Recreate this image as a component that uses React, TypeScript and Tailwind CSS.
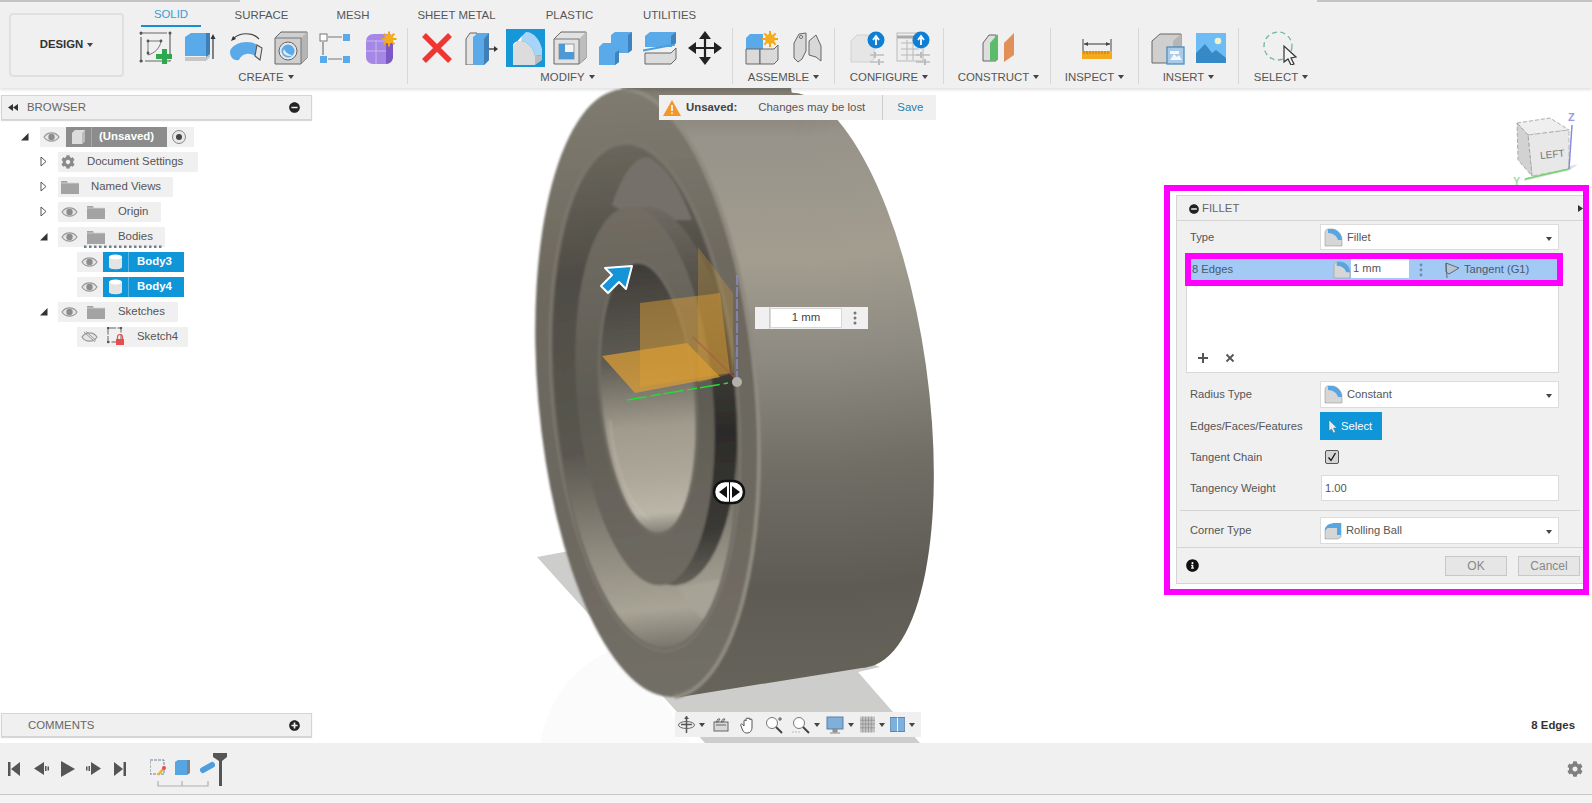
import React from 'react';
import { FaCog, FaInfoCircle, FaMinusCircle, FaPlusCircle } from 'react-icons/fa';

const Caret = () => (
  <span className="ml-[4px] inline-block border-x-[3px] border-t-[4px] border-x-transparent border-t-[#444]" />
);

const Sk = ({ children, w = 34, h = 34, className = '' }: { children: React.ReactNode; w?: number; h?: number; className?: string }) => (
  <svg width={w} height={h} viewBox={`0 0 ${w} ${h}`} className={`shrink-0 ${className}`}>
    {children}
  </svg>
);

// ribbon icons
const SketchIco = () => (
  <Sk>
    <rect x="2" y="2" width="29" height="28" fill="none" stroke="#666" strokeWidth="1.2" strokeDasharray="26 2" />
    <path d="M9 24V10h13M9 24C16 22 21 17 22 10" fill="none" stroke="#777" strokeWidth="1" />
    <circle cx="9" cy="10" r="1.4" fill="#555" /><circle cx="22" cy="10" r="1.4" fill="#555" /><circle cx="9" cy="22" r="1.4" fill="#555" />
    <circle cx="2" cy="2" r="1.5" fill="#555" /><circle cx="31" cy="2" r="1.5" fill="#555" /><circle cx="2" cy="30" r="1.5" fill="#555" />
    <path d="M23 18h5v5h5v5h-5v5h-5v-5h-6v-5h6z" fill="#2ea84d" />
  </Sk>
);
const ExtrudeIco = () => (
  <Sk>
    <path d="M1 6l6-4h19v23H1z" fill="#5aa9e8" /><path d="M22 2h4v23l-4 3z" fill="#3f7fb6" />
    <path d="M1 26h21l4-3v3l-4 4H1z" fill="#c6c6c6" />
    <path d="M29 28V5" stroke="#444" strokeWidth="1.3" /><path d="M26.5 8l2.5-5 2.5 5z" fill="#333" />
  </Sk>
);
const RevolveIco = () => (
  <Sk>
    <path d="M4 8C11 1 24 1 30 8" fill="none" stroke="#444" strokeWidth="1.2" /><path d="M2 10l2-5 3 3z" fill="#333" />
    <path d="M1 20C5 10 22 9 28 14l-2 11c-5-4-13-3-16 4-6 1-9-3-9-9z" fill="#5aa9e8" />
    <path d="M28 14l5 3-2 12-5-4z" fill="#e8e8e8" stroke="#555" strokeWidth="1.1" />
  </Sk>
);
const HoleIco = () => (
  <Sk>
    <path d="M1 7l6-6h26v26l-6 6H1z" fill="#cfcfcf" stroke="#666" strokeWidth="1" /><path d="M27 7l6-6v26l-6 6z" fill="#b5b5b5" /><path d="M1 7h26v26" fill="none" stroke="#777" />
    <circle cx="14" cy="20" r="9" fill="#e8e8e8" stroke="#666" /><circle cx="14" cy="20" r="6.5" fill="#5aa9e8" /><path d="M10 18c2 4 5 6 9 6-3 2-9 1-10-3z" fill="#e8e8e8" />
  </Sk>
);
const PatternIco = () => (
  <Sk>
    <rect x="1" y="3" width="7" height="7" fill="#fff" stroke="#777" /><rect x="24" y="3" width="7" height="7" fill="#5aa9e8" />
    <rect x="1" y="25" width="7" height="7" fill="#5aa9e8" /><rect x="24" y="25" width="7" height="7" fill="#5aa9e8" />
    <path d="M9 6h14M4 11v13M9 28h14" stroke="#777" strokeWidth="1.2" />
  </Sk>
);
const Star = ({ x, y, r = 7 }: { x: number; y: number; r?: number }) => (
  <g transform={`translate(${x} ${y})`}>
    {[0, 45, 90, 135].map((a) => (
      <rect key={a} x={-r} y={-1} width={r * 2} height={2} fill="#f4a312" transform={`rotate(${a})`} />
    ))}
    <circle r={r * 0.62} fill="#f6ad1c" />
  </g>
);
const FormIco = () => (
  <Sk>
    <path d="M2 11c0-5 3-8 8-8h17v24c0 4-3 6-7 6H9c-4 0-7-3-7-7z" fill="#a588e6" /><path d="M22 33V10l7-6v22c0 4-3 7-7 7z" fill="#7c58c4" />
    <path d="M2 20h20M12 9v24M2 10h20" stroke="#c9b5ef" strokeWidth="1" />
    <Star x={25} y={8} r={7.5} />
  </Sk>
);
const RedX = () => (
  <Sk><path d="M4 4l26 26M30 4L4 30" stroke="#ee3633" strokeWidth="5.5" /></Sk>
);
const PressPull = () => (
  <Sk>
    <path d="M1 8l4-6h7v32H1z" fill="#e4e4e4" stroke="#666" /><path d="M8 6l5-4h11v27l-5 5H8z" fill="#5aa9e8" /><path d="M19 8l5-6v27l-5 5z" fill="#3f7fb6" />
    <path d="M24 18h6" stroke="#333" strokeWidth="1.3" /><path d="M29 15l4 3-4 3z" fill="#333" />
  </Sk>
);
const FilletBig = () => (
  <div className="-ml-[4px] -mr-[3px] h-[38px] w-[39px] shrink-0 bg-[#1597d8]">
    <Sk w={39} h={38}>
      <path d="M7 36V17c0-3 3-5 8-5 7 0 13 8 14 15v9z" fill="#dcdcdc" />
      <path d="M7 17l9-10h5l-6 5c-5 0-8 2-8 5z" fill="#fff" />
      <path d="M16 7l4-4c8 0 14 8 16 17v6l-7 1c-1-7-7-15-14-15z" fill="#a8d4f7" />
      <path d="M29 27l7-1v5l-7 5z" fill="#bdbdbd" />
    </Sk>
  </div>
);
const ShellIco = () => (
  <Sk>
    <path d="M1 8l7-7h25v26l-7 6H1z" fill="#e2e2e2" stroke="#666" /><path d="M26 8l7-7v26l-7 6z" fill="#bdbdbd" /><path d="M1 8h25v25" fill="none" stroke="#777" />
    <rect x="6" y="13" width="15" height="15" fill="#f4f4f4" stroke="#999" /><path d="M6 13h6v8h9v7H6z" fill="#4f98d6" />
  </Sk>
);
const CombineIco = () => (
  <Sk>
    <path d="M1 16l4-4h8V4l4-3h17v18l-4 3h-9v9l-4 3H1z" fill="#5aa9e8" /><path d="M30 4l4-3v18l-4 3zM17 22l4-3v12l-4 3z" fill="#3f82bc" />
  </Sk>
);
const SplitIco = () => (
  <Sk>
    <path d="M2 5l5-4h26v11l-5 4H2z" fill="#5aa9e8" /><path d="M28 5l5-4v11l-5 4z" fill="#3f82bc" />
    <path d="M0 19l32-6M0 20l32-6" stroke="#4a9edc" strokeWidth="1.2" />
    <path d="M2 22h26l5-5v11l-5 5H2z" fill="#dcdcdc" stroke="#666" />
  </Sk>
);
const MoveIco = () => (
  <Sk>
    <path d="M17 3v28M3 17h28" stroke="#222" strokeWidth="2.2" />
    <path d="M17 0l6 8H11zM17 34l6-8H11zM0 17l8-6v12zM34 17l-8-6v12z" fill="#222" />
  </Sk>
);
const AssembleIco = () => (
  <Sk>
    <path d="M1 7l4-4h13v15H1z" fill="#5aa9e8" /><path d="M1 18h14v15H1z" fill="#dadada" stroke="#666" /><path d="M15 18h14l4-4v15l-4 4H15z" fill="#dadada" stroke="#666" />
    <Star x={25} y={8} r={8} />
  </Sk>
);
const JointIco = () => (
  <Sk w={30}>
    <path d="M2 12l5-9 7-1v18l-4 8-4 3-4-4z" fill="#d8d8d8" stroke="#666" /><path d="M17 10l7-6 5 11v15l-5-4-7-2z" fill="#d8d8d8" stroke="#666" />
    <circle cx="9" cy="6" r="1.5" fill="#fff" stroke="#666" />
  </Sk>
);
const ConfigBadge = ({ x }: { x: number }) => (
  <g>
    <circle cx={x} cy="9" r="8.5" fill="#0f7fd6" />
    <path d={`M${x} 14V7M${x - 3} 9l3-4 3 4`} stroke="#fff" strokeWidth="1.8" fill="none" />
    <path d="M20 24h14M20 31h14" stroke="#bcbcbc" strokeWidth="1.3" /><path d="M25 21v6M29 28v6" stroke="#bcbcbc" strokeWidth="2" />
  </g>
);
const ConfigA = () => (
  <Sk w={36}>
    <path d="M1 10l6-6h17v24l-4 3H1z" fill="#e6e6e6" stroke="#d0d0d0" />
    <ConfigBadge x={26} />
  </Sk>
);
const ConfigB = () => (
  <Sk>
    <rect x="1" y="2" width="26" height="28" fill="#eee" stroke="#b9b9b9" /><path d="M1 6h26" stroke="#aaa" strokeWidth="3" />
    <path d="M5 12h18M5 18h18M5 24h18M11 9v20M17 9v20" stroke="#b8b8b8" />
    <ConfigBadge x={25} />
  </Sk>
);
const ConstructIco = () => (
  <Sk>
    <path d="M1 12l6-8h7v26H1z" fill="#dedede" stroke="#666" /><path d="M8 30V12l8-9v26z" fill="#5dbb6c" />
    <path d="M22 31V12l10-10v22z" fill="#e2905a" />
  </Sk>
);
const InspectIco = () => (
  <Sk w={32}>
    <path d="M2 8v13M30 8v13" stroke="#555" strokeWidth="1.1" /><path d="M3 13h26" stroke="#444" strokeWidth="1.1" /><path d="M3 13l4-2v4zM29 13l-4-2v4z" fill="#444" />
    <rect x="1" y="20" width="30" height="8" fill="#f5a91c" /><path d="M3 20v3M6 20v3M9 20v3M12 20v3M15 20v3M18 20v3M21 20v3M24 20v3M27 20v3" stroke="#a26a10" strokeWidth="0.8" />
  </Sk>
);
const InsertA = () => (
  <Sk>
    <path d="M1 10l8-7h21v25l-8 4H1z" fill="#cfcfcf" stroke="#666" /><path d="M22 10l8-7v25l-8 4z" fill="#b5b5b5" />
    <rect x="16" y="16" width="17" height="17" fill="#a9cbe8" stroke="#4d8fc2" strokeWidth="1.3" /><path d="M19 29l4-6 3 3 2-2 3 5zM19 20h9v3h-9z" fill="#f3f8fc" />
  </Sk>
);
const InsertB = () => (
  <Sk w={30}>
    <rect y="2" width="30" height="30" fill="#6dbcf5" /><path d="M0 32V22l9-9 7 9 4-3 10 8v5z" fill="#3589c6" /><circle cx="22" cy="10" r="3.3" fill="#f0f2c8" />
  </Sk>
);
const SelectIco = () => (
  <Sk w={36}>
    <circle cx="16" cy="15" r="14" fill="none" stroke="#74b69a" strokeWidth="1.3" strokeDasharray="5 3.5" />
    <path d="M22 15v16l4-3 3 6 3-1-3-6 5-1z" fill="#f4f4f4" stroke="#333" strokeWidth="1.2" />
  </Sk>
);

const TABS = [
  { t: 'SOLID', c: 'w-[60px] border-b-[2px] border-[#1590d0] text-[#3c9ad0]' },
  { t: 'SURFACE', c: 'w-[121px]' },
  { t: 'MESH', c: 'w-[62px]' },
  { t: 'SHEET METAL', c: 'w-[145px]' },
  { t: 'PLASTIC', c: 'w-[81px]' },
  { t: 'UTILITIES', c: 'w-[119px]' },
];

const Group = ({ w, label, labelPad = '', pad = '', children }: { w: string; label: string; labelPad?: string; pad?: string; children: React.ReactNode }) => (
  <div className={`flex h-[56px] flex-col border-r border-[#d8d8d8] ${w}`}>
    <div className={`flex h-[40px] items-center ${pad}`}>{children}</div>
    <div className={`mt-[2px] flex items-center justify-center text-[11.4px] leading-[14px] text-[#555] ${labelPad}`}>
      {label}
      <Caret />
    </div>
  </div>
);

const Ribbon = () => (
  <header className="relative z-20 flex h-[88px] shrink-0 flex-col bg-[#f0f0f0] shadow-[0_2px_3px_rgba(0,0,0,0.12)]">
    <div className="flex h-[2px] shrink-0 justify-between">
      <div className="w-[240px] bg-[#c4c4c4]" />
      <div className="w-[275px] bg-[#c4c4c4]" />
    </div>
    <div className="flex">
      <button className="ml-[9px] mt-[11px] flex h-[64px] w-[115px] items-center justify-center rounded-[4px] border-2 border-[#e0e0e0] text-[11.4px] font-bold text-[#333]">
        DESIGN
        <Caret />
      </button>
      <div className="ml-[14px] flex flex-col">
        <div className="ml-[3px] flex h-[25px] text-[11.4px] text-[#555]">
          {TABS.map((tab) => (
            <div key={tab.t} className={`flex items-center justify-center pt-[2px] ${tab.c}`}>
              {tab.t}
            </div>
          ))}
        </div>
        <div className="mt-[1px] flex">
          <Group w="w-[270px]" label="CREATE" labelPad="pr-[13px]" pad="pl-[1px] gap-[11px]">
            <SketchIco /><ExtrudeIco /><RevolveIco /><HoleIco /><PatternIco /><FormIco />
          </Group>
          <Group w="w-[325px]" label="MODIFY" labelPad="pr-[5px]" pad="pl-[12px] gap-[11px]">
            <RedX /><PressPull /><FilletBig /><ShellIco /><CombineIco /><SplitIco /><MoveIco />
          </Group>
          <Group w="w-[102px]" label="ASSEMBLE" pad="pl-[12px] gap-[13px]">
            <AssembleIco /><JointIco />
          </Group>
          <Group w="w-[109px]" label="CONFIGURE" pad="pl-[15px] gap-[10px]">
            <ConfigA /><ConfigB />
          </Group>
          <Group w="w-[107px]" label="CONSTRUCT" labelPad="pl-[3px]" pad="pl-[38px]">
            <ConstructIco />
          </Group>
          <Group w="w-[88px]" label="INSPECT" pad="pl-[30px]">
            <InspectIco />
          </Group>
          <Group w="w-[100px]" label="INSERT" pad="pl-[12px] gap-[11px]">
            <InsertA /><InsertB />
          </Group>
          <div className="flex h-[56px] w-[84px] flex-col">
            <div className="flex h-[40px] items-center pl-[23px]">
              <SelectIco />
            </div>
            <div className="mt-[2px] flex items-center justify-center text-[11.4px] leading-[14px] text-[#555]">
              SELECT
              <Caret />
            </div>
          </div>
        </div>
      </div>
    </div>
  </header>
);

// browser tree
const Eye = ({ off }: { off?: boolean }) => (
  <svg width="17" height="12" viewBox="0 0 17 12" className="shrink-0">
    <path d="M1 6c3.500-5.500 11.500-5.500 15 0-3.500 5.500-11.500 5.500-15 0z" fill="#e6e6e6" stroke="#999" strokeWidth="1.2" />
    {off ? (
      <path d="M3 1l11 10M5 .5l10 9" stroke="#999" strokeWidth="1" />
    ) : (
      <circle cx="8.500" cy="6" r="3.200" fill="#8c8c8c" />
    )}
  </svg>
);
const Folder = () => (
  <svg width="18" height="14" viewBox="0 0 18 14" className="shrink-0">
    <path d="M0 1h6l1 2h11v11H0z" fill="#a3a3a3" />
    <path d="M0 3h18" stroke="#d6d6d6" strokeWidth=".8" />
  </svg>
);
const Cyl = () => (
  <svg width="15" height="16" viewBox="0 0 15 16">
    <path d="M1 3v10c0 3 13 3 13 0V3z" fill="#e4e4e4" />
    <ellipse cx="7.500" cy="3" rx="6.500" ry="2.500" fill="#fff" />
  </svg>
);
const Open = () => (
  <svg width="7" height="11" viewBox="0 0 7 11"><path d="M1 1l5 4.500-5 4.500z" fill="#fff" stroke="#555" /></svg>
);
const Down = () => (
  <svg width="8" height="8" viewBox="0 0 8 8"><path d="M0 7.500L7.500 0v7.500z" fill="#333" /></svg>
);

const Row = ({ pad, arrow, arrowBox = '', pill = '', children }: { pad: string; arrow?: React.ReactNode; arrowBox?: string; pill?: string; children: React.ReactNode }) => (
  <div className={`flex h-[25px] items-center ${pad}`}>
    {arrow !== undefined && <div className={`flex shrink-0 items-center ${arrowBox}`}>{arrow}</div>}
    <div className={`flex h-[20px] items-center bg-[#f0f0f0] text-[11.4px] text-[#555] ${pill}`}>{children}</div>
  </div>
);

const Tree = () => (
  <div className="mt-[4px]">
    <Row pad="pl-[20px]" arrowBox="w-[19px]" arrow={<Down />} pill="w-[154px] pl-[3px]">
      <Eye />
      <div className="ml-[6px] flex h-[20px] w-[101px] items-center bg-[#8c8c8c]">
        <div className="flex h-full w-[26px] items-center justify-center border-r border-[#a8a8a8]">
          <svg width="15" height="16" viewBox="0 0 15 16"><path d="M1 4l3-3h10v11l-3 3H1z" fill="#dcdcdc" /><path d="M11 4l3-3v11l-3 3z" fill="#bbb" /></svg>
        </div>
        <span className="ml-[7px] font-bold text-white">(Unsaved)</span>
      </div>
      <span className="ml-[5px] flex h-[14px] w-[14px] items-center justify-center rounded-full border border-[#888] bg-[#e8e8e8]">
        <span className="h-[6px] w-[6px] rounded-full bg-[#444]" />
      </span>
    </Row>
    <Row pad="pl-[39px]" arrowBox="w-[18px]" arrow={<Open />} pill="w-[140px] pl-[3px]">
      <FaCog size={14} color="#8a8a8a" />
      <span className="ml-[12px]">Document Settings</span>
    </Row>
    <Row pad="pl-[39px]" arrowBox="w-[18px]" arrow={<Open />} pill="w-[115px] pl-[3px]">
      <Folder />
      <span className="ml-[12px]">Named Views</span>
    </Row>
    <Row pad="pl-[39px]" arrowBox="w-[18px]" arrow={<Open />} pill="w-[103px] pl-[3px]">
      <Eye />
      <span className="ml-[9px]"><Folder /></span>
      <span className="ml-[13px]">Origin</span>
    </Row>
    <Row pad="pl-[39px]" arrowBox="w-[18px]" arrow={<Down />} pill="relative w-[107px] pl-[3px]">
      <Eye />
      <span className="ml-[9px]"><Folder /></span>
      <span className="ml-[13px]">Bodies</span>
      <svg width="80" height="5" viewBox="0 0 80 5" className="absolute left-[26px] top-[16px]">
        <path d="M0 4h80" stroke="#6e7f8a" strokeWidth="3" strokeDasharray="2.500 2.500" />
      </svg>
    </Row>
    {['Body3', 'Body4'].map((b) => (
      <Row key={b} pad="pl-[76px]" pill="w-[107px] pl-[4px]">
        <Eye />
        <div className="ml-[5px] flex h-[20px] w-[81px] items-center bg-[#0f96d9]">
          <div className="flex h-full w-[26px] items-center justify-center border-r border-[#5ab8e6]">
            <Cyl />
          </div>
          <span className="ml-[8px] font-bold text-white">{b}</span>
        </div>
      </Row>
    ))}
    <Row pad="pl-[39px]" arrowBox="w-[18px]" arrow={<Down />} pill="w-[120px] pl-[3px]">
      <Eye />
      <span className="ml-[9px]"><Folder /></span>
      <span className="ml-[13px]">Sketches</span>
    </Row>
    <Row pad="pl-[76px]" pill="w-[111px] pl-[4px]">
      <Eye off />
      <svg width="18" height="19" viewBox="0 0 18 19" className="ml-[9px] shrink-0">
        <rect x="1" y="1" width="13" height="14" fill="none" stroke="#666" strokeDasharray="8 1.500" />
        <circle cx="1" cy="1" r="1.200" fill="#555" /><circle cx="14" cy="1" r="1.200" fill="#555" /><circle cx="1" cy="15" r="1.200" fill="#555" />
        <rect x="9" y="12" width="8" height="6" fill="#e84c4c" /><path d="M10.500 12V10a2.500 2.500 0 015 0v2" fill="none" stroke="#e84c4c" strokeWidth="1.200" />
      </svg>
      <span className="ml-[12px]">Sketch4</span>
    </Row>
  </div>
);

const Panel = () => (
  <div className="absolute left-[1px] top-[7px] w-[311px]">
    <div className="flex h-[25px] items-center border border-[#d4d4d4] bg-[#f0f0f0] pl-[6px] pr-[11px] text-[11.4px] text-[#666] shadow-[0_1px_1px_rgba(0,0,0,0.15)]">
      <svg width="10" height="7" viewBox="0 0 10 7"><path d="M5 0v7L0 3.500zM10 0v7L5 3.500z" fill="#333" /></svg>
      <span className="ml-[9px]">BROWSER</span>
      <FaMinusCircle size={11} color="#222" className="ml-auto" />
    </div>
    <Tree />
  </div>
);

// 3d model, drawn in page coordinates
const Scene = () => (
  <svg className="absolute inset-0 h-full w-full" viewBox="0 88 1592 655" preserveAspectRatio="none">
    <defs>
      <linearGradient id="body" gradientUnits="userSpaceOnUse" x1="0" y1="88" x2="0" y2="700">
        <stop offset="0" stopColor="#7d796e" /><stop offset=".08" stopColor="#98938a" /><stop offset=".28" stopColor="#a29d8f" />
        <stop offset=".45" stopColor="#8c8981" /><stop offset=".62" stopColor="#716e66" /><stop offset=".82" stopColor="#5e5b54" /><stop offset="1" stopColor="#67645c" />
      </linearGradient>
      <linearGradient id="rim" gradientUnits="userSpaceOnUse" x1="0" y1="88" x2="0" y2="700">
        <stop offset="0" stopColor="#7f7b70" /><stop offset=".3" stopColor="#6d695f" /><stop offset=".6" stopColor="#6b675e" /><stop offset="1" stopColor="#726f67" />
      </linearGradient>
      <linearGradient id="open" gradientUnits="userSpaceOnUse" x1="0" y1="145" x2="0" y2="650">
        <stop offset="0" stopColor="#6a665c" /><stop offset=".25" stopColor="#4f4c45" /><stop offset=".6" stopColor="#5a5750" /><stop offset=".8" stopColor="#8f8b7f" /><stop offset=".92" stopColor="#a8a496" /><stop offset="1" stopColor="#76736a" />
      </linearGradient>
      <linearGradient id="shoulder" gradientUnits="userSpaceOnUse" x1="0" y1="205" x2="0" y2="590">
        <stop offset="0" stopColor="#6f6b62" /><stop offset=".2" stopColor="#55524b" /><stop offset=".6" stopColor="#2c2b29" /><stop offset=".85" stopColor="#3a3935" /><stop offset="1" stopColor="#67645c" />
      </linearGradient>
      <linearGradient id="face" gradientUnits="userSpaceOnUse" x1="0" y1="205" x2="0" y2="590">
        <stop offset="0" stopColor="#716d63" /><stop offset=".5" stopColor="#5f5c54" /><stop offset="1" stopColor="#6f6b62" />
      </linearGradient>
      <linearGradient id="hole" gradientUnits="userSpaceOnUse" x1="0" y1="265" x2="0" y2="535">
        <stop offset="0" stopColor="#3f3d38" /><stop offset=".35" stopColor="#5f5c54" /><stop offset=".6" stopColor="#a09b8d" /><stop offset=".78" stopColor="#aca799" /><stop offset=".92" stopColor="#bab6a8" /><stop offset="1" stopColor="#7d7a70" />
      </linearGradient>
      <clipPath id="openClip"><ellipse cx="645" cy="396" rx="90" ry="252" transform="rotate(-5 645 396)" /></clipPath>
      <filter id="soft"><feGaussianBlur stdDeviation="0.8" /></filter>
    </defs>

    <path d="M537 557L580 549 880 667 858 672 920 743H705z" fill="#cdcdcb" />
    <path d="M540 743c10-50 40-85 90-100l60 100z" fill="#fbfbfb" />

    <ellipse cx="826" cy="380" rx="101" ry="290" transform="rotate(-8 826 380)" fill="url(#body)" />
    <path d="M625 80H790L868 667 680 697z" fill="url(#body)" />

    <g filter="url(#soft)">
      <ellipse cx="648" cy="393" rx="110" ry="305" transform="rotate(-5 648 393)" fill="url(#rim)" />
      <path d="M621.400 89.200A110 305 -5 0 1 674.600 696.800" fill="none" stroke="#8f8b80" strokeWidth="4" />
      <ellipse cx="645" cy="396" rx="93" ry="256" transform="rotate(-5 645 396)" fill="none" stroke="#7c786f" strokeWidth="2" />
      <ellipse cx="645" cy="396" rx="90" ry="252" transform="rotate(-5 645 396)" fill="url(#open)" />
      <g clipPath="url(#openClip)">
        <path d="M612 205C625 165 640 155 650 158 670 170 680 190 692 220L640 220z" fill="#75716a" />
        <ellipse cx="660" cy="396" rx="76" ry="190" transform="rotate(-5 660 396)" fill="url(#shoulder)" />
        <path d="M678 587L728 578 722 628C705 625 690 610 678 587z" fill="#a8a497" opacity=".8" />
      </g>
      <ellipse cx="645" cy="396" rx="68" ry="190" transform="rotate(-5 645 396)" fill="url(#face)" />
      <ellipse cx="648" cy="398" rx="49" ry="139" transform="rotate(-5 648 398)" fill="#6f6c63" />
      <ellipse cx="648" cy="398" rx="46" ry="135" transform="rotate(-5 648 398)" fill="url(#hole)" />
      <path d="M610 420c4 45 18 85 40 100" fill="none" stroke="#d8d4c8" strokeWidth="1.500" opacity=".3" />
    </g>

    {/* construction planes and axes */}
    <path d="M698 247l35 46v80l-35 10z" fill="#d19a3a" opacity=".3" />
    <path d="M640 303l80-10 10 80-90 14z" fill="#d89c34" opacity=".5" />
    <path d="M602 356l85-13 33 34-85 16z" fill="#d89c34" opacity=".75" />
    <path d="M693 337l44 43" stroke="#a85a4a" strokeWidth="1.500" opacity=".7" />
    <path d="M737 275v105" stroke="#8b8ac6" strokeWidth="1.500" strokeDasharray="10 2" />
    <path d="M627 400l101-17" stroke="#22dd33" strokeWidth="1.500" strokeDasharray="20 4 10 3" />
    <circle cx="737" cy="382" r="5" fill="#b4b1a9" />

    <path d="M632 266l-6 23-7-7-11 11-7-7 11-11-7-7z" fill="#1594d8" stroke="#fff" strokeWidth="2" strokeLinejoin="round" />

    {/* slider grip */}
    <rect x="714" y="481" width="30" height="22" rx="11" fill="#fff" stroke="#111" strokeWidth="2.500" />
    <path d="M727 486v12l-8-6zM732 486v12l8-6z" fill="#111" />
    <path d="M729.500 482v20" stroke="#111" strokeWidth="1" />

    {/* view cube */}
    <path d="M1524 181l46-11 8-6-54 15z" fill="#aaa" opacity=".4" />
    <path d="M1517 123l33-5 19 12-41 5z" fill="#efefef" stroke="#999" strokeDasharray="4 2" strokeWidth=".8" />
    <path d="M1528 135l41-5v39l-37 7z" fill="#e8e8e8" stroke="#aaa" strokeDasharray="5 2" strokeWidth=".8" />
    <path d="M1517 123l11 12 4 41-14-16z" fill="#d2d2d2" stroke="#999" strokeDasharray="4 2" strokeWidth=".8" />
    <text x="1540" y="158" fontSize="10" fill="#777" transform="rotate(-6 1550 154)">LEFT</text>
    <path d="M1572 125l-3 44" stroke="#8a8ae6" strokeWidth="1.500" />
    <path d="M1525 179l44-10" stroke="#74d46e" strokeWidth="1.500" />
    <text x="1568" y="121" fontSize="11" fontWeight="bold" fill="#9a9ae8">Z</text>
    <text x="1513" y="185" fontSize="11" fontWeight="bold" fill="#9ee09a">Y</text>
  </svg>
);

const UnsavedBar = () => (
  <div className="absolute left-[659px] top-[7px] flex h-[25px] w-[277px] items-center bg-[#f0f0f0] text-[11.4px] text-[#555]">
    <svg width="18" height="16" viewBox="0 0 18 16" className="ml-[4px] shrink-0">
      <path d="M9 0l9 16H0z" fill="#f4972b" />
      <path d="M9 5v6M9 12.500v1.500" stroke="#fff" strokeWidth="1.600" />
    </svg>
    <span className="ml-[5px] font-bold text-[#444]">Unsaved:</span>
    <span className="ml-[21px]">Changes may be lost</span>
    <span className="ml-[17px] flex h-full items-center border-l border-[#ccc] pl-[14px] text-[#2e7ba6]">Save</span>
  </div>
);

const DimInput = () => (
  <div className="absolute left-[755px] top-[219px] flex h-[22px] w-[113px] items-center bg-[#f0f0f0]">
    <div className="ml-[3px] h-full w-[12px] border-r border-[#ccc]" />
    <div className="flex h-[20px] w-[72px] items-center justify-center border border-[#d8d8d8] bg-white text-[11.4px] text-[#444]">1 mm</div>
    <svg width="4" height="14" viewBox="0 0 4 14" className="ml-[11px]"><circle cx="2" cy="2" r="1.500" fill="#777" /><circle cx="2" cy="7" r="1.500" fill="#777" /><circle cx="2" cy="12" r="1.500" fill="#777" /></svg>
  </div>
);

const ViewBar = () => (
  <div className="absolute bottom-[6px] left-[675px] flex h-[25px] w-[246px] items-center bg-[#f0f0f0] pl-[3px] [&>svg]:shrink-0">
    <svg width="17" height="17" viewBox="0 0 17 17"><path d="M8.500 0v17M3 8.500h11" stroke="#555" strokeWidth="1.500" /><ellipse cx="8.500" cy="9" rx="8" ry="3.500" fill="none" stroke="#666" /><path d="M6 3l2.500-3L11 3z" fill="#555" /></svg>
    <Caret />
    <svg width="16" height="14" viewBox="0 0 16 14" className="ml-[8px]"><rect x="1" y="4" width="14" height="9" fill="#d8d8d8" stroke="#666" /><path d="M3 4l2-3h2L5 4zM8 4l2-3h2l-2 3zM3 7h10" stroke="#666" fill="none" /></svg>
    <svg width="18" height="18" viewBox="0 0 18 18" className="ml-[10px]"><path d="M5 10V5a1 1 0 012 0V3a1 1 0 012 0v0a1 1 0 012 0v1a1 1 0 012 0v7c0 4-2 6-5 6-2 0-3-1-4-2L2 10c-1-2 1-3 2-1z" fill="#fff" stroke="#555" /></svg>
    <svg width="18" height="18" viewBox="0 0 18 18" className="ml-[8px]"><circle cx="7" cy="7" r="5.500" fill="#fff" stroke="#777" /><path d="M11 11l6 6" stroke="#444" strokeWidth="2" /><path d="M15 1v4M13 3h4" stroke="#555" /></svg>
    <svg width="18" height="18" viewBox="0 0 18 18" className="ml-[9px]"><circle cx="7" cy="7" r="5.500" fill="#fff" stroke="#777" /><path d="M11 11l6 6" stroke="#444" strokeWidth="2" /><path d="M0 16h9" stroke="#bbb" strokeDasharray="2 1" /></svg>
    <Caret />
    <svg width="18" height="18" viewBox="0 0 18 18" className="ml-[6px]"><rect x="1" y="1" width="16" height="12" fill="#7fb0dc" stroke="#5a7f9f" /><path d="M7 13h4v3H7zM4 17h10" fill="#999" stroke="#888" /></svg>
    <Caret />
    <svg width="15" height="17" viewBox="0 0 16 17" className="ml-[6px]"><rect width="16" height="17" fill="#c4c4c4" /><path d="M3 0v17M6 0v17M9 0v17M12 0v17M0 4h16M0 8h16M0 12h16" stroke="#8a8a8a" strokeWidth=".7" /></svg>
    <Caret />
    <svg width="15" height="15" viewBox="0 0 16 15" className="ml-[5px]"><rect width="16" height="15" fill="#7fb0dc" stroke="#5a7f9f" /><path d="M8 0v15" stroke="#f2f6fa" strokeWidth="1" /></svg>
    <Caret />
  </div>
);

// fillet dialog
const FilletMini = ({ size = 19 }: { size?: number }) => (
  <svg width={size} height={size} viewBox="0 0 19 19" className="shrink-0">
    <path d="M1 18V5c0-2 1-4 3-4h4c5 0 10 5 10 11v6z" fill="#d6d6d6" stroke="#999" strokeWidth=".6" />
    <path d="M4 1h4c5 0 10 5 10 11h-4C13 8 9 5 4 5z" fill="#55a6e2" />
  </svg>
);

const Field = ({ label, h, mt, children }: { label: string; h: string; mt: string; children: React.ReactNode }) => (
  <div className={`flex items-center pl-[13px] ${h} ${mt}`}>
    <span className="w-[130px] text-[#555]">{label}</span>
    {children}
  </div>
);

function SelectBox({ icon, text }: { icon: React.ReactNode; text: string }) {
  return (
    <div className="flex h-full w-[239px] items-center border border-[#dcdcdc] bg-white pl-[3px] pr-[6px]">
      {icon}
      <span className="ml-[4px] text-[#555]">{text}</span>
      <span className="ml-auto"><Caret /></span>
    </div>
  );
}

const FilletDialog = () => (
  <div className="absolute left-[1164px] top-[97px] h-[410px] w-[425px] border-[6px] border-[#ff00ff] bg-white pl-[6px] pt-[4px] pb-[5px]">
    <div className="flex h-full flex-col border-y border-l border-[#d4d4d4] bg-[#f0f0f0] text-[11.2px]">
      <div className="flex h-[25px] shrink-0 items-center border-b border-[#d4d4d4] pl-[12px] pt-[1px] text-[#666]">
        <FaMinusCircle size={10} color="#222" />
        <span className="ml-[3px] text-[11.4px]">FILLET</span>
        <svg width="5" height="7" viewBox="0 0 5 7" className="ml-auto"><path d="M0 0l5 3.500L0 7z" fill="#333" /></svg>
      </div>
      <Field label="Type" h="h-[26px]" mt="mt-[3px]">
        <SelectBox icon={<FilletMini />} text="Fillet" />
      </Field>
      <div className="relative z-10 ml-[8px] mt-[3px] h-[33px] w-[378px] shrink-0 border-[6px] border-[#ff00ff] bg-[#a3c9f5]">
        <div className="flex h-full items-center pl-[1px] text-[#4a5a6a]">
          <span className="w-[141px]">8 Edges</span>
          <FilletMini size={18} />
          <div className="flex h-[19px] w-[58px] items-center self-start bg-white pl-[2px] text-[#555]">1 mm</div>
          <svg width="4" height="14" viewBox="0 0 4 14" className="ml-[10px]"><circle cx="2" cy="2" r="1.400" fill="#6f8aa6" /><circle cx="2" cy="7" r="1.400" fill="#6f8aa6" /><circle cx="2" cy="12" r="1.400" fill="#6f8aa6" /></svg>
          <svg width="17" height="16" viewBox="0 0 17 16" className="ml-[20px]"><path d="M3 1l13 5-10 6-3-2z" fill="#b9c4d0" stroke="#5c6a78" /><path d="M3 1l1 15" stroke="#5c6a78" /></svg>
          <span className="ml-[4px]">Tangent (G1)</span>
        </div>
      </div>
      <div className="-mt-[6px] ml-[9px] flex h-[93px] w-[373px] shrink-0 items-end gap-[15px] border border-[#d8d8d8] bg-white pb-[8px] pl-[10px]">
        <svg width="12" height="12" viewBox="0 0 12 12"><path d="M6 1v10M1 6h10" stroke="#555" strokeWidth="2" /></svg>
        <svg width="12" height="12" viewBox="0 0 12 12"><path d="M2.500 2.500l7 7M9.500 2.500l-7 7" stroke="#555" strokeWidth="1.800" /></svg>
      </div>
      <Field label="Radius Type" h="h-[27px]" mt="mt-[8px]">
        <SelectBox icon={<FilletMini />} text="Constant" />
      </Field>
      <Field label="Edges/Faces/Features" h="h-[28px]" mt="mt-[4px]">
        <div className="flex h-full w-[62px] items-center bg-[#0f96d9] pl-[8px] text-white">
          <svg width="9" height="13" viewBox="0 0 9 13"><path d="M1 0v11l2.500-2 2 4 2-1-2-4H9z" fill="#e6eef4" stroke="#56606a" strokeWidth=".5" /></svg>
          <span className="ml-[4px]">Select</span>
        </div>
      </Field>
      <Field label="Tangent Chain" h="h-[14px]" mt="mt-[10px]">
        <div className="ml-[5px] flex h-[14px] w-[14px] items-center justify-center rounded-[2px] border border-[#555] bg-[#d4d4d4]">
          <svg width="10" height="10" viewBox="0 0 10 10"><path d="M1.500 5.500L4 8.500 8.500 1" fill="none" stroke="#111" strokeWidth="1.300" /></svg>
        </div>
      </Field>
      <Field label="Tangency Weight" h="h-[26px]" mt="mt-[11px]">
        <div className="ml-[1px] flex h-full w-[238px] items-center border border-[#dcdcdc] bg-white pl-[3px] text-[#555]">1.00</div>
      </Field>
      <div className="mx-[3px] mt-[9px] shrink-0 border-t border-[#d4d4d4]" />
      <Field label="Corner Type" h="h-[27px]" mt="mt-[6px]">
        <SelectBox
          icon={
            <svg width="18" height="19" viewBox="0 0 18 19" className="shrink-0">
              <path d="M1 18V8l3-4h10l3-2v14l-3 2z" fill="#d6d6d6" stroke="#888" strokeWidth=".5" />
              <path d="M1 8c1-4 6-6 10-6h6v12h-4V7H5C3 7 2 8 1 10z" fill="#55a6e2" />
            </svg>
          }
          text="Rolling Ball"
        />
      </Field>
      <div className="mt-[3px] shrink-0 border-t border-[#d4d4d4]" />
      <div className="flex flex-1 items-center pl-[9px] pr-[3px]">
        <FaInfoCircle size={13} color="#111" />
        <button className="ml-auto flex h-[20px] w-[62px] items-center justify-center border border-[#c8c8c8] bg-[#e6e6e6] text-[12px] text-[#888]">OK</button>
        <button className="ml-[11px] flex h-[20px] w-[62px] items-center justify-center border border-[#c8c8c8] bg-[#e6e6e6] text-[12px] text-[#888]">Cancel</button>
      </div>
    </div>
  </div>
);

// timeline
const Timeline = () => (
  <footer className="flex h-[52px] shrink-0 items-center border-b border-[#c8c8c8] bg-[#f0f0f0] pl-[8px] pr-[9px]">
    <svg width="12" height="14" viewBox="0 0 12 14"><path d="M0 0h2.500v14H0zM12 0v14L3 7z" fill="#555" /></svg>
    <svg width="15" height="13" viewBox="0 0 15 13" className="ml-[14px]"><path d="M10 0v13L0 6.500zM11 4h1.500v5H11zM13.500 4.500H15v4h-1.500z" fill="#555" /></svg>
    <svg width="14" height="16" viewBox="0 0 14 16" className="ml-[12px]"><path d="M0 0l14 8-14 8z" fill="#555" /></svg>
    <svg width="15" height="13" viewBox="0 0 15 13" className="ml-[11px]"><path d="M5 0v13l10-6.500zM2.500 4H4v5H2.500zM0 4.500h1.500v4H0z" fill="#555" /></svg>
    <svg width="12" height="14" viewBox="0 0 12 14" className="ml-[13px]"><path d="M0 0v14l9-7zM9.500 0H12v14H9.500z" fill="#555" /></svg>
    <svg width="80" height="40" viewBox="0 0 80 40" className="ml-[24px] shrink-0">
      <rect x="0" y="11" width="14" height="14" fill="none" stroke="#6f8296" strokeDasharray="3 1" />
      <path d="M8 26l6-7" stroke="#e8b53a" strokeWidth="2.500" /><circle cx="14" cy="19" r="2" fill="#e84c4c" />
      <path d="M25 13l3-2h9v15H25z" fill="#55a6e2" /><path d="M37 11h3v13l-3 2z" fill="#3b3b3b" opacity=".6" />
      <path d="M53 21l9-5" stroke="#4c9edd" strokeWidth="6" strokeLinecap="round" />
      <path d="M8 32v5h50v-5M32 32v5" fill="none" stroke="#b0b0b0" strokeWidth="1.200" />
      <path d="M63 4h14v4l-5 4v25h-3V12l-6-4z" fill="#555" />
    </svg>
    <FaCog size={16} color="#808080" className="ml-auto" />
  </footer>
);

export default function App() {
  return (
    <div className="flex h-[803px] w-full flex-col overflow-hidden bg-white font-['Liberation_Sans',Arial,sans-serif]">
      <Ribbon />
      <main className="relative flex-1 overflow-hidden bg-white">
        <Scene />
        <Panel />
        <div className="absolute bottom-[6px] left-[1px] flex h-[24px] w-[311px] items-center border border-[#d4d4d4] bg-[#f0f0f0] pl-[26px] pr-[11px] pt-[1px] text-[11.4px] text-[#666] shadow-[0_1px_1px_rgba(0,0,0,0.15)]">
          COMMENTS
          <FaPlusCircle size={11} color="#222" className="ml-auto" />
        </div>
        <UnsavedBar />
        <DimInput />
        <ViewBar />
        <FilletDialog />
        <div className="absolute bottom-[9px] right-[17px] text-[11.4px] font-bold text-[#333]">8 Edges</div>
      </main>
      <Timeline />
      <div className="h-[8px] shrink-0 bg-[#f4f4f4]" />
    </div>
  );
}
